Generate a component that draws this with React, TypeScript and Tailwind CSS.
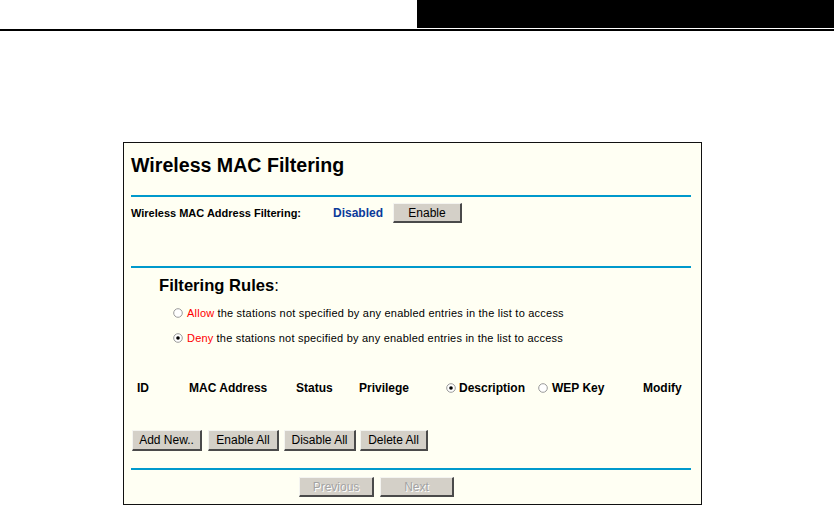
import React from "react";

function Radio({ checked }: { checked?: boolean }) {
  return (
    <svg width="10" height="10" viewBox="0 0 10 10" className="shrink-0">
      <circle cx="5" cy="5" r="4.3" fill="#ffffff" stroke="#9a9a9a" strokeWidth="1" />
      {checked && <circle cx="5" cy="5" r="1.8" fill="#000000" />}
    </svg>
  );
}

function Btn({ children, w, disabled }: { children: React.ReactNode; w: string; disabled?: boolean }) {
  return (
    <div
      className={
        "flex h-full items-center justify-center bg-[#d4d0c8] border-t border-l border-t-[#f4f4f0] border-l-[#f4f4f0] border-r-2 border-b-2 border-r-[#4a4a4a] border-b-[#4a4a4a] text-[12px] leading-none " +
        w +
        (disabled ? " text-[#a3a3a3] [text-shadow:1px_1px_0_#ffffff]" : " text-black")
      }
    >
      {children}
    </div>
  );
}

export default function App() {
  return (
    <div className="w-[837px] h-[506px] bg-white overflow-hidden font-['Liberation_Sans',Arial,sans-serif] text-black">
      <div className="w-[834px] flex justify-end">
        <div className="w-[417px] h-[28px] bg-black" />
      </div>
      <div className="w-[834px] h-[2px] mt-[1px] bg-black" />

      <div className="ml-[123px] mt-[111px] w-[579px] h-[363px] border border-[#111] bg-[#fffff3] pl-[7px] pt-[11px] flex flex-col">
        <div className="h-[22px] leading-[22px] text-[19.6px] font-bold">Wireless MAC Filtering</div>
        <div className="mt-[19px] w-[560px] h-[2px] bg-[#0099cc]" />

        <div className="mt-[6px] h-[20px] flex items-center">
          <div className="w-[202px] text-[11px] font-bold">Wireless MAC Address Filtering:</div>
          <div className="w-[60px] text-[12px] font-bold text-[#0b3a9a]">Disabled</div>
          <Btn w="w-[69px]">Enable</Btn>
        </div>

        <div className="mt-[43px] w-[560px] h-[2px] bg-[#0099cc]" />

        <div className="mt-[8px] h-[20px] pl-[28px] flex items-center text-[16.6px]">
          <span className="font-bold">Filtering Rules</span>
          <span>:</span>
        </div>

        <div className="mt-[9px] h-[16px] pl-[42px] flex items-center text-[11px] tracking-[0.22px]">
          <Radio />
          <span className="ml-[4px] text-[#ff0000]">Allow</span>
          <span className="ml-[3px]">the stations not specified by any enabled entries in the list to access</span>
        </div>
        <div className="mt-[9px] h-[16px] pl-[42px] flex items-center text-[11px] tracking-[0.22px]">
          <Radio checked />
          <span className="ml-[4px] text-[#ff0000]">Deny</span>
          <span className="ml-[3px]">the stations not specified by any enabled entries in the list to access</span>
        </div>

        <div className="mt-[32px] h-[20px] pl-[6px] flex items-center text-[12px] font-bold">
          <div className="w-[52px]">ID</div>
          <div className="w-[107px]">MAC Address</div>
          <div className="w-[63px]">Status</div>
          <div className="w-[87px]">Privilege</div>
          <div className="w-[92px] flex items-center">
            <Radio checked />
            <span className="ml-[3px]">Description</span>
          </div>
          <div className="w-[105px] flex items-center">
            <Radio />
            <span className="ml-[4px]">WEP Key</span>
          </div>
          <div>Modify</div>
        </div>

        <div className="mt-[32px] h-[21px] flex">
          <div className="ml-[1px] h-full">
            <Btn w="w-[70px]">Add New..</Btn>
          </div>
          <div className="ml-[6px] h-full">
            <Btn w="w-[71px]">Enable All</Btn>
          </div>
          <div className="ml-[5px] h-full">
            <Btn w="w-[72px]">Disable All</Btn>
          </div>
          <div className="ml-[4px] h-full">
            <Btn w="w-[68px]">Delete All</Btn>
          </div>
        </div>

        <div className="mt-[17px] w-[560px] h-[2px] bg-[#0099cc]" />

        <div className="mt-[7px] h-[20px] pl-[168px] flex">
          <Btn w="w-[75px]" disabled>Previous</Btn>
          <div className="ml-[6px] h-full">
            <Btn w="w-[74px]" disabled>Next</Btn>
          </div>
        </div>
      </div>
    </div>
  );
}
